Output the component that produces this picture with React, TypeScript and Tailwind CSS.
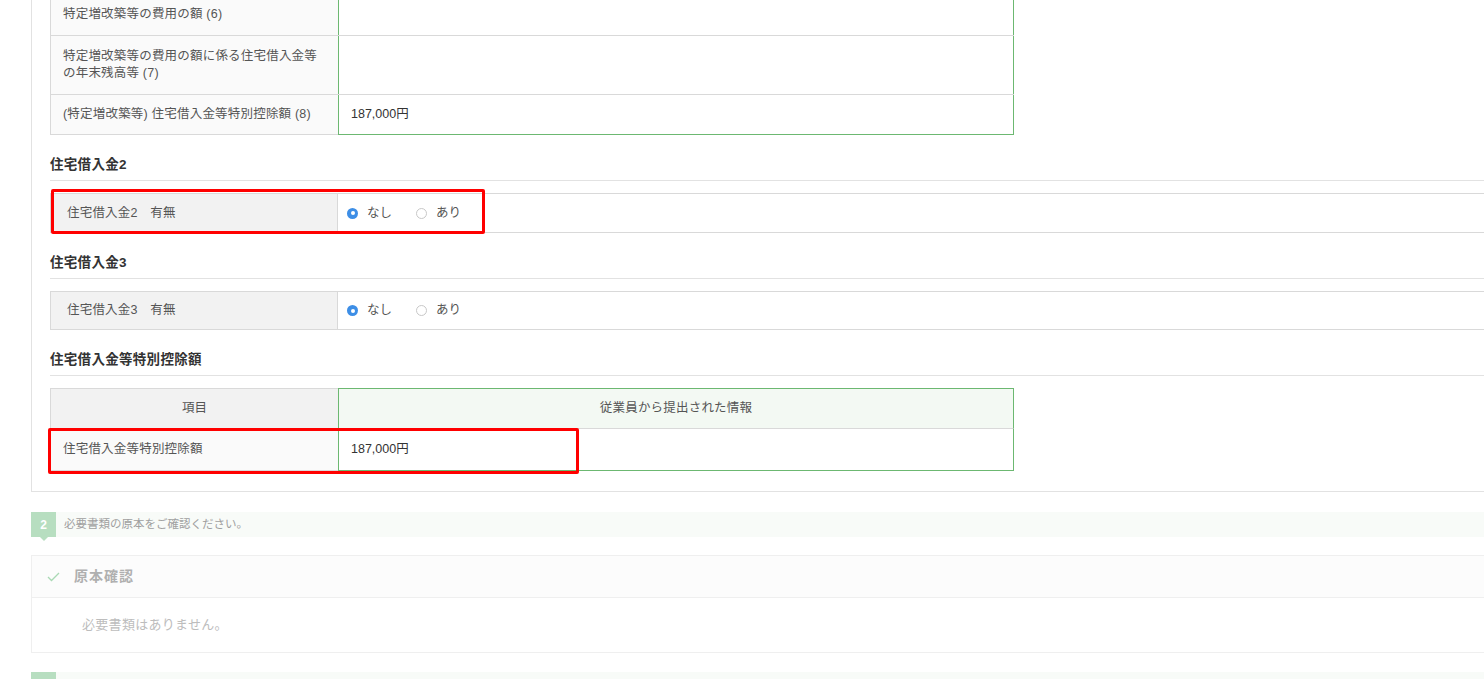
import React from 'react';

const FONT = { fontFamily: '"Liberation Sans", "Noto Sans CJK JP", sans-serif' };

const Radio = ({ checked, label }: { checked: boolean; label: string }) => (
    <label className="flex items-center gap-[9px] text-[12.5px] text-[#555]">
        {checked ? (
            <span className="w-[11px] h-[11px] rounded-full bg-[#3d8ee6] flex items-center justify-center">
                <span className="w-[4px] h-[4px] rounded-full bg-white" />
            </span>
        ) : (
            <span className="w-[11px] h-[11px] rounded-full border border-[#c8c8c8] bg-white" />
        )}
        <span>{label}</span>
    </label>
);

const SectionHeading = ({ title }: { title: string }) => (
    <div className="mt-[20px] pb-[5px] border-b border-[#e2e2e2] text-[13.5px] font-bold text-[#333] leading-[20px] tracking-[0.3px]">{title}</div>
);

const ExistRow = ({ label, short }: { label: string; short?: boolean }) => (
    <div className={`mt-[12px] flex border-y border-[#d9d9d9] ${short ? 'h-[39px]' : 'h-[40px]'}`}>
        <div className="w-[288px] shrink-0 bg-[#f2f2f2] border-l border-r border-[#d9d9d9] pl-[16px] flex items-center text-[12.5px] tracking-[0.2px] text-[#555]">{label}</div>
        <div className="flex-1 flex items-center gap-[24px] pl-[9px]">
            <Radio checked label="なし" />
            <Radio checked={false} label="あり" />
        </div>
    </div>
);

export default function App() {
    return (
        <div className="relative w-[1484px] h-[679px] overflow-hidden bg-white" style={FONT}>
            {/* main panel */}
            <div className="ml-[31px] w-[1500px] border-l border-b border-[#e2e2e2] pl-[18px] pb-[20px]">
                {/* top table (scrolled, cut off) */}
                <div className="-mt-[6px] w-[964px]">
                    <div className="flex h-[42px] border-b border-[#d9d9d9]">
                        <div className="w-[288px] shrink-0 bg-[#fafafa] border-l border-[#d9d9d9] pl-[12px] flex items-center text-[12.5px] tracking-[0.2px] text-[#555]">特定増改築等の費用の額 (6)</div>
                        <div className="flex-1 border-l border-r border-[#6cb871]" />
                    </div>
                    <div className="flex h-[59px] border-b border-[#d9d9d9]">
                        <div className="w-[288px] shrink-0 bg-[#fafafa] border-l border-[#d9d9d9] pl-[12px] pr-[18px] flex items-center text-[12.5px] tracking-[0.2px] leading-[17px] text-[#555]">特定増改築等の費用の額に係る住宅借入金等の年末残高等 (7)</div>
                        <div className="flex-1 border-l border-r border-[#6cb871]" />
                    </div>
                    <div className="flex h-[40px]">
                        <div className="w-[288px] shrink-0 bg-[#fafafa] border-l border-b border-[#d9d9d9] pl-[12px] flex items-center text-[12.5px] tracking-[0.2px] text-[#555]">(特定増改築等) 住宅借入金等特別控除額 (8)</div>
                        <div className="flex-1 border-l border-r border-b border-[#6cb871] pl-[12px] flex items-center text-[12.5px] text-[#333]">187,000円</div>
                    </div>
                </div>

                <SectionHeading title="住宅借入金2" />
                <ExistRow label="住宅借入金2　有無" />

                <SectionHeading title="住宅借入金3" />
                <ExistRow label="住宅借入金3　有無" short />

                <SectionHeading title="住宅借入金等特別控除額" />
                <div className="mt-[12px] w-[964px]">
                    <div className="flex h-[41px]">
                        <div className="w-[288px] shrink-0 bg-[#f2f2f2] border-l border-t border-b border-[#d9d9d9] flex items-center justify-center text-[12.5px] text-[#555]">項目</div>
                        <div className="flex-1 bg-[#f3f9f3] border border-[#6cb871] border-b-[#d9d9d9] flex items-center justify-center text-[12.5px] tracking-[0.2px] text-[#555]">従業員から提出された情報</div>
                    </div>
                    <div className="flex h-[42px]">
                        <div className="w-[288px] shrink-0 bg-[#fafafa] border-l border-b border-[#d9d9d9] pl-[12px] flex items-center text-[12.5px] tracking-[0.2px] text-[#555]">住宅借入金等特別控除額</div>
                        <div className="flex-1 border-l border-r border-b border-[#6cb871] pl-[12px] flex items-center text-[12.5px] text-[#333]">187,000円</div>
                    </div>
                </div>
            </div>

            {/* step 2 */}
            <div className="mt-[20px] ml-[31px] flex h-[25px] bg-[#f8fbf8]">
                <div className="relative w-[25px] shrink-0 bg-[#b7dec0] flex items-center justify-center text-[12px] font-bold text-white">
                    2
                    <span className="absolute left-[9px] -bottom-[4px] w-0 h-0 border-x-[4px] border-x-transparent border-t-[4px] border-t-[#b7dec0]" />
                </div>
                <div className="pl-[8px] flex items-center text-[11.5px] text-[#a0a0a0]">必要書類の原本をご確認ください。</div>
            </div>

            <div className="mt-[18px] ml-[31px] w-[1500px] border border-[#efefef]">
                <div className="h-[42px] bg-[#fcfcfc] border-b border-[#efefef] flex items-center pl-[15px] gap-[14px]">
                    <svg width="13" height="10" viewBox="0 0 13 10" fill="none">
                        <path d="M1 5 L4.5 8.5 L12 1" stroke="#a9d9b4" strokeWidth="1.3" />
                    </svg>
                    <span className="text-[14px] font-bold text-[#b0b0b0] tracking-[1px]">原本確認</span>
                </div>
                <div className="h-[54px] pl-[50px] flex items-center text-[13px] tracking-[0.3px] text-[#bdbdbd]">必要書類はありません。</div>
            </div>

            {/* step 3 (cut off) */}
            <div className="mt-[19px] ml-[31px] flex h-[25px] bg-[#f8fbf8]">
                <div className="w-[25px] shrink-0 bg-[#b7dec0]" />
            </div>

            {/* annotation boxes */}
            <div className="absolute left-[51px] top-[189px] w-[434px] h-[45px] border-[3px] border-[#ff0000] rounded-[2px]" />
            <div className="absolute left-[48px] top-[428px] w-[531px] h-[46px] border-[3px] border-[#ff0000] rounded-[2px]" />
        </div>
    );
}
